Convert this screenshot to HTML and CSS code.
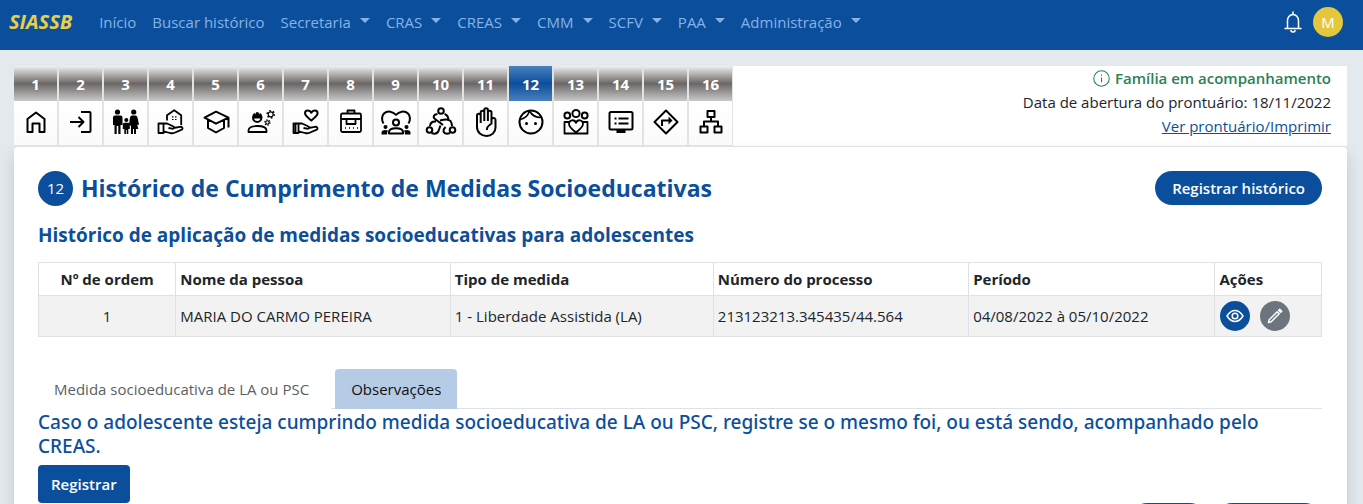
FILE: index.html
```html
<!DOCTYPE html>
<html lang="pt-BR">
<head>
<meta charset="utf-8">
<meta name="viewport" content="width=device-width, initial-scale=1">
<title>SIASSB</title>
<link rel="stylesheet" href="styles.css">
</head>
<body>
<header class="navbar">
  <a class="brand" href="#">SIASSB</a>
  <nav class="menu">
    <a href="#">Início</a>
    <a href="#">Buscar histórico</a>
    <a class="dropdown" href="#">Secretaria</a>
    <a class="dropdown" href="#">CRAS</a>
    <a class="dropdown" href="#">CREAS</a>
    <a class="dropdown" href="#">CMM</a>
    <a class="dropdown" href="#">SCFV</a>
    <a class="dropdown" href="#">PAA</a>
    <a class="dropdown" href="#">Administração</a>
  </nav>
  <div class="account">
    <button class="bell" type="button" aria-label="Notificações">
      <svg viewBox="0 0 20 22" width="20" height="22"><path d="M10 1v2M2 17.500h16M4.500 17V9.500a5.500 6 0 0 1 11 0V17M8 19.500a2 1.500 0 0 0 4 0"/></svg>
    </button>
    <button class="avatar" type="button">M</button>
  </div>
</header>

<main class="page">
  <section class="record-bar">
    <nav class="steps">
      <a class="step" href="#"><span class="num">1</span><span class="pic"><svg viewBox="0 0 32 32"><path d="M7.500 13 16 6.500l8.500 6.500v13h-5v-8.500h-7V26h-5z"/></svg></span></a>
      <a class="step" href="#"><span class="num">2</span><span class="pic"><svg viewBox="0 0 32 32"><path d="M5 16h13M13.500 11l5 5-5 5M16 6h8.500q1 0 1 1v18q0 1-1 1H16"/></svg></span></a>
      <a class="step" href="#"><span class="num">3</span><span class="pic"><svg viewBox="0 0 32 32" class="solid"><circle cx="7.500" cy="6" r="2.600"/><path d="M5 9.500h5.500q2 0 2 2V19h-2v9H8.300v-8H6.700v8H4.500v-9h-1.500v-7.500q0-2 2-2z"/><circle cx="16.300" cy="14" r="2"/><path d="M14.300 16.800h4q1.500 0 1.500 1.500V23h-1.500v5h-1.600v-4h-.8v4h-1.600v-5h-1.500v-4.700q0-1.500 1.500-1.500z"/><circle cx="23.700" cy="6" r="2.600"/><path d="M22 9.500h3.500q1.500 0 2 2l1.500 7-1.700.6 1 3.900h-2.300v5h-2v-5h-1V28h-2v-8l-2-1.500 1-7q.4-2 2-2z"/></svg></span></a>
      <a class="step" href="#"><span class="num">4</span><span class="pic"><svg viewBox="0 0 32 32"><path d="M12 14.500V9.200l7.200-5 7 5V19" stroke-width="1.800"/><path d="M17 10.800h1.500M20 10.800h1.500M17 13.500h1.500M20 13.500h1.500" stroke-width="1.200"/><path d="M3.500 17.500h5v9.500h-5zM8.500 17.500h3.500l6 2.800c2 1 1 2.700-.8 2.400L13.500 22M18.500 22l6.500-1.200c2-.3 3.500 2 1.800 2.800L19 27q-1.500.5-4 0l-6.500-1.600" stroke-width="1.800"/></svg></span></a>
      <a class="step" href="#"><span class="num">5</span><span class="pic"><svg viewBox="0 0 32 32"><path d="m4.500 11.700 11.500-6 12.500 6-12.500 6zM8 14v8l8 4.500 8-4.500v-8M28.500 12v9.500"/></svg></span></a>
      <a class="step" href="#"><span class="num">6</span><span class="pic"><svg viewBox="0 0 32 32"><path d="M8 11.500a4.200 4.500 0 0 0 8.400 0z"/><path class="fill" d="M7 11.500q.3-3.500 2.700-4.700l.5 2 .8-2.600h2.500l.8 2.600.6-2q2.300 1.200 2.600 4.700z"/><path d="M3.500 26v-1.500q0-4.500 9-4.500t9 4.500V26z" stroke-width="1.800"/><circle cx="25.700" cy="8.300" r="2.500" stroke-width="1.200"/><circle cx="25.700" cy="8.300" r="3.600" stroke-width="1.500" stroke-dasharray="1.600 2.170"/><circle cx="22.400" cy="16.500" r="1.700" stroke-width="1.100"/><circle cx="22.400" cy="16.500" r="2.600" stroke-width="1.300" stroke-dasharray="1.200 1.520"/></svg></span></a>
      <a class="step" href="#"><span class="num">7</span><span class="pic"><svg viewBox="0 0 32 32"><path d="M21.300 14.500C17 11 15 9.500 15 7.300c0-3.500 4.800-3.700 6.300-.6 1.500-3.100 6.300-2.900 6.300.6 0 2.200-2 3.700-6.300 7.200z"/><path d="M3.500 17.500h5v9.500h-5zM5.500 18v9M8.500 17.500h3.500l6 2.800c2 1 1 2.700-.8 2.400L13.500 22M18.500 22l6.500-1.200c2-.3 3.500 2 1.800 2.800L19 27q-1.500.5-4 0l-6.500-1.600" stroke-width="1.800"/></svg></span></a>
      <a class="step" href="#"><span class="num">8</span><span class="pic"><svg viewBox="0 0 32 32"><path d="M12.500 7.500V4.500h7v3M6 13V9q0-1.500 1.500-1.500h17Q26 7.500 26 9v4zM6 12v12.500q0 1.500 1.500 1.500h17q1.500 0 1.500-1.500V12M11.500 12.500V18h9v-5.500" stroke-width="1.800"/><path d="M10 22h1M14 22h1M18 22h1M22 22h1" stroke-width="1.600"/></svg></span></a>
      <a class="step" href="#"><span class="num">9</span><span class="pic"><svg viewBox="0 0 32 32"><path d="M3.500 17.500C1.500 14.500 1.500 10 4 7.500c3.500-3.300 9-2 12 1.300 3-3.300 8.500-4.600 12-1.300 2.500 2.500 2.500 7 .5 10"/><circle cx="16" cy="16.500" r="3"/><path d="M9 27.500v-1.200q0-4 7-4t7 4v1.200z"/><g class="fill"><circle cx="5.500" cy="21" r="2"/><circle cx="26.500" cy="21" r="2"/><path d="M1.500 28.500v-2q0-2.500 4-2.500 1.500 0 2.500.8-1 1.200-1 3.700zM30.500 28.500v-2q0-2.500-4-2.500-1.500 0-2.500.8 1 1.200 1 3.700z"/></g></svg></span></a>
      <a class="step" href="#"><span class="num">10</span><span class="pic"><svg viewBox="0 0 32 32"><circle cx="16" cy="5" r="2.800"/><circle cx="4.500" cy="24" r="2.800"/><circle cx="27.500" cy="24" r="2.800"/><path d="M12.500 8C8.500 8.500 7.500 11 10 13l8 6M19.500 8q4 1 4 7M5 20q.5-5 6-4.500M6.500 27q5 2 7-2l2-5.500M15 14.500q8-2 10.500.5 1.500 2 1.500 5M25 27q-5 2-6.500-1.500-.5-2 2-4.500"/></svg></span></a>
      <a class="step" href="#"><span class="num">11</span><span class="pic"><svg viewBox="0 0 32 32"><path d="M10.700 17V6.500c0-2.500 3.600-2.500 3.600 0V4c0-2.400 3.600-2.400 3.600 0v2.500c0-2.500 3.600-2.500 3.600 0V14c0-2.500 4-2.700 4 0v7.500c0 5-4 8.500-9 8.500s-9.500-3.500-9.500-9V9.500c0-2.400 3.700-2.400 3.700 0M14.300 6v9M17.900 6v9M21.500 13v4.500l-2.500 2q-2.200 1.500-2.200 4.500"/></svg></span></a>
      <a class="step active" href="#"><span class="num">12</span><span class="pic"><svg viewBox="0 0 32 32"><circle cx="16" cy="16" r="11.500"/><path d="M5 13.500Q12 12.500 14.500 5q4 7 12.500 6.500" stroke-width="1.600"/><g class="fill"><circle cx="11.500" cy="17.500" r="1.500"/><circle cx="20.500" cy="17.500" r="1.500"/></g></svg></span></a>
      <a class="step" href="#"><span class="num">13</span><span class="pic"><svg viewBox="0 0 32 32"><circle cx="16" cy="7.500" r="3.600"/><circle cx="7.300" cy="9.500" r="2.900"/><circle cx="24.700" cy="9.500" r="2.900"/><path d="M9 16H4.500v11.500h23V16H23M16 26.500c-4.500-3.500-7-6-7-8.500 0-4.500 5.500-5 7-1.200 1.500-3.800 7-3.300 7 1.200 0 2.500-2.500 5-7 8.500z" stroke-width="1.800"/></svg></span></a>
      <a class="step" href="#"><span class="num">14</span><span class="pic"><svg viewBox="0 0 32 32"><rect x="4.500" y="6" width="23" height="17.500" rx="1.500"/><path d="M9.500 12.500h2M13.500 12.500h10M9.500 17.500h2M13.500 17.500h10" stroke-width="1.800"/><path d="M11.500 25.500h9" stroke-width="3"/></svg></span></a>
      <a class="step" href="#"><span class="num">15</span><span class="pic"><svg viewBox="0 0 32 32"><path d="m16 4.500 11.500 11.500L16 27.500 4.500 16z"/><path d="M12 20v-5.500h8"/><path class="fill" d="m18.500 10.500 4 4-4 4z"/></svg></span></a>
      <a class="step" href="#"><span class="num">16</span><span class="pic"><svg viewBox="0 0 32 32"><path d="M12.500 5h7v6h-7zM5.500 20.500h7v6h-7zM19.500 20.500h7v6h-7zM16 11v4.500M9 20.500v-5h14v5"/></svg></span></a>
    </nav>
    <div class="record-info">
      <p class="status"><svg viewBox="0 0 16 16" width="17" height="17"><circle cx="8" cy="8" r="7.300"/><path d="M8 7v4.500M8 4.200v1.300"/></svg>Família em acompanhamento</p>
      <p>Data de abertura do prontuário: 18/11/2022</p>
      <p><a href="#">Ver prontuário/Imprimir</a></p>
    </div>
  </section>

  <section class="card">
    <div class="card-head">
      <span class="badge">12</span>
      <h1>Histórico de Cumprimento de Medidas Socioeducativas</h1>
      <button class="btn pill" type="button">Registrar histórico</button>
    </div>
    <h2>Histórico de aplicação de medidas socioeducativas para adolescentes</h2>
    <table class="history">
      <colgroup><col class="c-order"><col class="c-name"><col class="c-type"><col class="c-process"><col class="c-period"><col class="c-actions"></colgroup>
      <thead>
        <tr><th class="center">Nº de ordem</th><th>Nome da pessoa</th><th>Tipo de medida</th><th>Número do processo</th><th>Período</th><th>Ações</th></tr>
      </thead>
      <tbody>
        <tr>
          <td class="center">1</td><td>MARIA DO CARMO PEREIRA</td><td>1 - Liberdade Assistida (LA)</td><td>213123213.345435/44.564</td><td>04/08/2022 à 05/10/2022</td>
          <td><div class="actions">
            <button class="round view" type="button" aria-label="Visualizar"><svg viewBox="0 0 18 18" width="18" height="18"><path d="M1 9q3.500-5.500 8-5.500T17 9q-3.500 5.500-8 5.500T1 9z"/><circle cx="9" cy="9" r="2.800"/></svg></button>
            <button class="round edit" type="button" aria-label="Editar"><svg viewBox="0 0 18 18" width="18" height="18"><path d="m2.500 15.500.7-2.700 8-8 2 2-8 8z"/><path d="m12.700 3.300 1-1 2 2-1 1z" fill="currentColor"/></svg></button>
          </div></td>
        </tr>
      </tbody>
    </table>
    <div class="tabs" role="tablist">
      <button class="tab" type="button" role="tab" aria-selected="false">Medida socioeducativa de LA ou PSC</button>
      <button class="tab selected" type="button" role="tab" aria-selected="true">Observações</button>
    </div>
    <p class="hint">Caso o adolescente esteja cumprindo medida socioeducativa de LA ou PSC, registre se o mesmo foi, ou está sendo, acompanhado pelo CREAS.</p>
    <button class="btn" type="button">Registrar</button>
    <div class="pager">
      <button class="btn pill" type="button">Voltar</button>
      <button class="btn pill" type="button">Continuar</button>
    </div>
  </section>
</main>
</body>
</html>
```
FILE: styles.css
```css
* { box-sizing: border-box; }
html, body { height: 100%; }
body {
  margin: 0;
  overflow: hidden;
  background: #e4e9ee;
  color: #212529;
  font: 15px/24px "Segoe UI", "Open Sans", "Noto Sans", sans-serif;
}
h1, h2, p { margin: 0; }
button { font: inherit; border: 0; padding: 0; cursor: pointer; }
svg { fill: none; stroke: currentColor; }

.navbar {
  display: flex;
  align-items: center;
  height: 50px;
  padding: 0 20px 6px 9px;
  background: #0b4f9c;
}
.brand {
  margin-right: 19px;
  color: #e8cf4a;
  font-size: 20px;
  font-weight: 700;
  font-style: italic;
  text-decoration: none;
}
.menu { display: flex; }
.menu a { padding: 0 8px; color: #85b3e6; text-decoration: none; white-space: nowrap; }
.menu .dropdown { display: flex; align-items: center; gap: 9px; }
.dropdown::after { content: ""; margin-bottom: 4px; border: 5px solid transparent; border-top-color: currentColor; border-bottom: 0; }
.account { display: flex; align-items: center; gap: 10px; margin-left: auto; }
.bell { display: flex; background: none; color: #fff; }
.bell svg { stroke-width: 1.5; stroke-linecap: round; }
.avatar { width: 30px; height: 30px; border-radius: 50%; background: #e5c73b; color: #fff; }

.page { padding: 16px 16px 0 14px; }
.record-bar {
  display: flex;
  justify-content: space-between;
  background: #fff;
}
.steps { display: flex; }
.step { width: 45px; border-right: 2px solid #e3e3e3; color: #000; text-decoration: none; }
.step:last-child { border-right-width: 1px; width: 44px; }
.num {
  display: grid;
  place-items: center;
  height: 35px;
  background: linear-gradient(#f0f0f0, #6b6766 50%, #c9c9c9);
  color: #fff;
  font-weight: 700;
}
.active .num { background: linear-gradient(#4a80c0, #0b4f9c 50%, #4a80c0); }
.pic {
  display: grid;
  place-items: center;
  height: 45px;
  padding-bottom: 2px;
  border-bottom: 1px solid #e3e3e3;
  background: linear-gradient(#fff, #fafafa);
}
.pic svg { width: 32px; height: 32px; stroke-width: 2; stroke-linejoin: round; }
.pic .solid, .pic .fill { fill: currentColor; stroke: none; }
.record-info { padding-right: 16px; text-align: right; }
.status { display: flex; align-items: center; justify-content: flex-end; gap: 5px; color: #2c8055; font-weight: 600; }
.record-info a { color: #0b4f9c; }

.card {
  padding: 24px 25px 24px 24px;
  border-top: 1px solid #dee2e6;
  border-radius: 4px;
  background: #fff;
  box-shadow: 0 8px 16px rgba(0, 0, 0, 0.15);
}
.card-head { display: flex; align-items: center; gap: 8px; height: 34px; }
.badge {
  display: grid;
  place-items: center;
  width: 35px;
  height: 35px;
  border-radius: 50%;
  background: #0b4f9c;
  color: #fff;
}
h1 { color: #0b4f9c; font-size: 23px; font-weight: 700; line-height: 28px; }
.btn {
  height: 38px;
  padding: 0 13px;
  border-radius: 4px;
  background: #0b4f9c;
  color: #fff;
  font-weight: 600;
}
.pill { height: 34px; padding: 0 17px; border-radius: 17px; }
.card-head .btn { margin-left: auto; }
h2 { margin: 18px 0 15px; color: #0b4f9c; font-size: 19px; font-weight: 700; line-height: 24px; }

.history { width: 100%; border-collapse: collapse; table-layout: fixed; }
.history th, .history td { padding: 4px; border: 1px solid #dee2e6; text-align: left; }
.history th { font-weight: 700; }
.history .center { text-align: center; }
.history td { background: #f2f2f2; }
.c-order { width: 10.7%; }
.c-name { width: 21.4%; }
.c-type { width: 20.5%; }
.c-process { width: 19.9%; }
.c-period { width: 19.2%; }
.c-actions { width: 8.3%; }
.actions { display: flex; gap: 10px; padding: 1px; }
.round { display: grid; place-items: center; width: 30px; height: 30px; border-radius: 50%; color: #fff; }
.round svg { stroke-width: 1.5; stroke-linejoin: round; }
.view { background: #0b4f9c; }
.edit { background: #6c757d; }

.tabs { display: flex; gap: 4px; margin-top: 32px; border-bottom: 1px solid #dee2e6; }
.tab { height: 40px; margin-bottom: -1px; padding: 0 16px; border-radius: 4px 4px 0 0; background: #fff; color: #5a5f66; }
.tab:first-child { padding-right: 22px; }
.tab.selected { background: #b6cbe6; color: #111; }
.hint {
  margin: 1px 0 7px;
  padding-right: 40px;
  color: #0b4f9c;
  font-family: "Segoe UI", "Noto Sans", "Open Sans", sans-serif;
  font-size: 19px;
  font-weight: 500;
  line-height: 24px;
}
.pager { display: flex; justify-content: flex-end; gap: 8px; }
```
